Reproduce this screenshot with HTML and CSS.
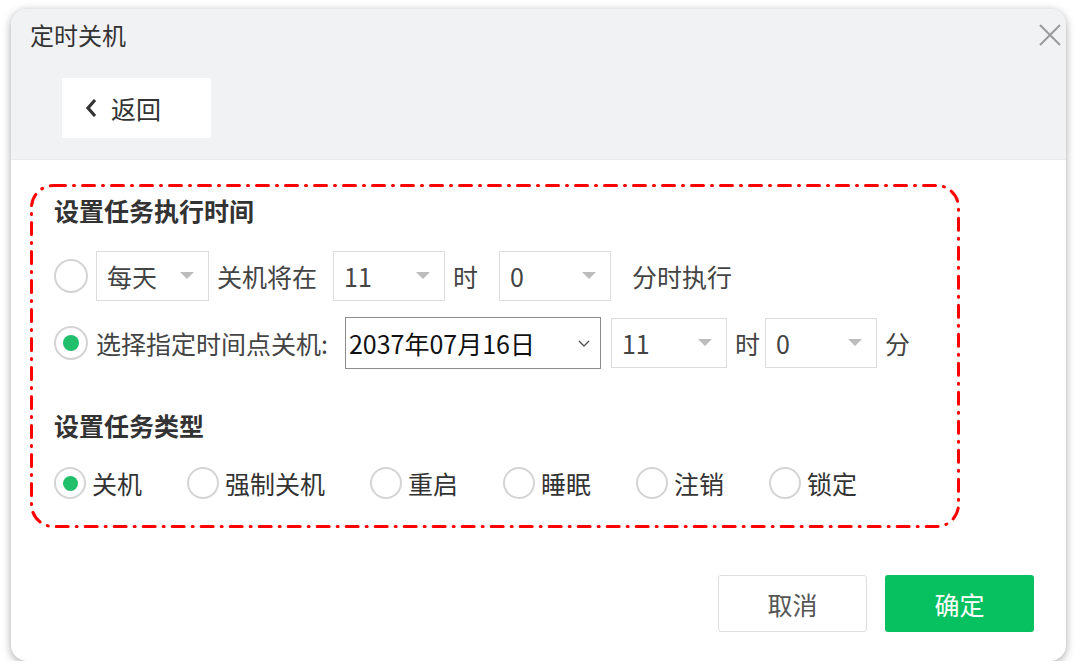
FILE: index.html
```html
<!DOCTYPE html>
<html lang="zh-CN">
<head>
  <meta charset="UTF-8" />
  <meta name="viewport" content="width=device-width, initial-scale=1" />
  <title>定时关机</title>
  <link rel="stylesheet" href="styles.css">
</head>
<body>

  <div class="dialog">
    <div class="dialog-head">
      <div class="dialog-title">定时关机</div>
      <button class="close-btn" aria-label="关闭">
        <svg width="24" height="24" viewBox="0 0 24 24">
          <path d="M2 2 L22 22 M22 2 L2 22" stroke="#9a9a9a" stroke-width="2" fill="none" />
        </svg>
      </button>
      <a class="back-btn" href="#">
        <svg width="14" height="22" viewBox="0 0 14 22">
          <polyline points="11,3 4,11 11,19" stroke="#333" stroke-width="3.2" fill="none" />
        </svg>
        <span>返回</span>
      </a>
    </div>

    <div class="dialog-body">
      <div class="task-box">
        <!-- dash-dot outline round the task settings -->
        <svg class="task-outline" width="930" height="344" viewBox="0 0 930 344">
          <rect x="1.5" y="1.5" width="927" height="341" rx="22" ry="22"
                fill="none" stroke="#ff0000" stroke-width="3"
                stroke-linecap="round" stroke-dasharray="12 8 1 8" />
        </svg>

        <h3 class="task-title">设置任务执行时间</h3>

        <div class="task-row row-daily">
          <span class="radio"></span>
          <div class="select sel-day">每天<i class="caret"></i></div>
          <span class="label label-will">关机将在</span>
          <div class="select sel-num">11<i class="caret"></i></div>
          <span class="label label-hour">时</span>
          <div class="select sel-num">0<i class="caret"></i></div>
          <span class="label label-run">分时执行</span>
        </div>

        <div class="task-row row-date">
          <span class="radio checked"></span>
          <span class="label label-pick">选择指定时间点关机:</span>
          <div class="date-box">
            2037年07月16日
            <svg class="date-arrow" width="12" height="7" viewBox="0 0 12 7">
              <polyline points="1,1 6,6 11,1" stroke="#555" stroke-width="1.4" fill="none" />
            </svg>
          </div>
          <div class="select sel-hour">11<i class="caret"></i></div>
          <span class="label label-h2">时</span>
          <div class="select sel-num">0<i class="caret"></i></div>
          <span class="label label-m2">分</span>
        </div>

        <h3 class="task-title title-type">设置任务类型</h3>

        <div class="type-row">
          <label class="type-item"><span class="radio small checked"></span>关机</label>
          <label class="type-item"><span class="radio small"></span>强制关机</label>
          <label class="type-item"><span class="radio small"></span>重启</label>
          <label class="type-item"><span class="radio small"></span>睡眠</label>
          <label class="type-item"><span class="radio small"></span>注销</label>
          <label class="type-item"><span class="radio small"></span>锁定</label>
        </div>
      </div>
    </div>

    <div class="dialog-foot">
      <button class="btn btn-cancel">取消</button>
      <button class="btn btn-ok">确定</button>
    </div>
  </div>

</body>
</html>
```

FILE: styles.css
```css
body {
  font-family: "Noto Sans CJK SC", "Noto Sans", sans-serif;
  margin: 0;
  padding: 0;
  background: #fff;
  color: #333;
}

.dialog {
  position: relative;
  margin: 9px 0 0 11px;
  width: 1055px;
  height: 652px;
  background: #fff;
  border-radius: 16px;
  box-shadow: 0 2px 9px rgba(0, 0, 0, 0.35);
  overflow: hidden;
  display: flex;
  flex-direction: column;
}

.dialog-head {
  height: 151px;
  background: #f1f2f4;
  border-bottom: 1px solid #e9eaec;
  padding: 13px 0 0 19px;
  box-sizing: border-box;
}

.dialog-title {
  font-size: 24px;
  line-height: 26px;
  color: #333;
}

.close-btn {
  position: absolute;
  top: 14px;
  right: 4px;
  padding: 0;
  border: none;
  background: none;
  width: 24px;
  height: 24px;
}

.back-btn {
  display: flex;
  align-items: center;
  gap: 13px;
  width: 149px;
  height: 60px;
  margin: 30px 0 0 32px;
  padding-left: 22px;
  box-sizing: border-box;
  background: #fff;
  color: #333;
  font-size: 25px;
  text-decoration: none;
}

.dialog-body {
  padding: 24px 0 0 19px;
}

.task-box {
  position: relative;
  width: 930px;
  height: 344px;
  box-sizing: border-box;
  padding: 11px 0 0 24px;
}

.task-outline {
  position: absolute;
  top: 0;
  left: 0;
  pointer-events: none;
}

.task-title {
  margin: 0;
  font-size: 25px;
  line-height: 30px;
  font-weight: bold;
  color: #333;
}

.title-type {
  margin-top: 41px;
}

.task-row {
  display: flex;
  align-items: center;
  font-size: 25px;
  color: #444;
}

.row-daily {
  height: 50px;
  margin-top: 26px;
}

.row-date {
  height: 52px;
  margin-top: 16px;
}

.label {
  white-space: nowrap;
}

.label-will { margin: 0 16px 0 8px; }
.label-hour { margin: 0 21px 0 8px; }
.label-run { margin-left: 21px; }
.label-pick { margin-right: 17px; }
.label-h2 { margin: 0 5px 0 8px; }
.label-m2 { margin-left: 8px; }

.radio {
  width: 30px;
  height: 30px;
  border: 2px solid #d4d4d4;
  border-radius: 50%;
  background: #fff;
  flex-shrink: 0;
  display: flex;
  align-items: center;
  justify-content: center;
}

.row-daily .radio,
.row-date .radio {
  margin-right: 8px;
}

.radio.checked::after {
  content: "";
  width: 16px;
  height: 16px;
  border-radius: 50%;
  background: #1fbf6c;
}

.radio.small {
  width: 28px;
  height: 28px;
}

.radio.small.checked::after {
  width: 15px;
  height: 15px;
}

.select {
  position: relative;
  height: 50px;
  border: 1px solid #dcdcdc;
  box-sizing: border-box;
  padding-left: 10px;
  display: flex;
  align-items: center;
  color: #444;
  background: #fff;
}

.sel-day { width: 113px; }
.sel-num { width: 112px; }
.sel-hour { width: 116px; }

.caret {
  position: absolute;
  right: 14px;
  top: 20px;
  width: 0;
  height: 0;
  border-left: 7px solid transparent;
  border-right: 7px solid transparent;
  border-top: 7px solid #bcbcbc;
}

.date-box {
  position: relative;
  width: 256px;
  height: 52px;
  border: 1px solid #8c8c8c;
  box-sizing: border-box;
  padding-left: 3px;
  margin-right: 10px;
  display: flex;
  align-items: center;
  color: #111;
  font-size: 25px;
}

.date-arrow {
  position: absolute;
  right: 10px;
  top: 22px;
}

.type-row {
  display: flex;
  align-items: center;
  gap: 45px;
  height: 34px;
  margin-top: 26px;
  font-size: 25px;
  color: #333;
}

.type-item {
  display: flex;
  align-items: center;
  gap: 6px;
}

.dialog-foot {
  margin-top: auto;
  display: flex;
  justify-content: flex-end;
  gap: 18px;
  padding: 0 32px 29px 0;
}

.btn {
  width: 149px;
  height: 57px;
  border-radius: 3px;
  font-family: inherit;
  font-size: 25px;
  cursor: pointer;
}

.btn-cancel {
  background: #fff;
  border: 1px solid #dedede;
  color: #555;
}

.btn-ok {
  background: #07c160;
  border: none;
  color: #fff;
}
```
